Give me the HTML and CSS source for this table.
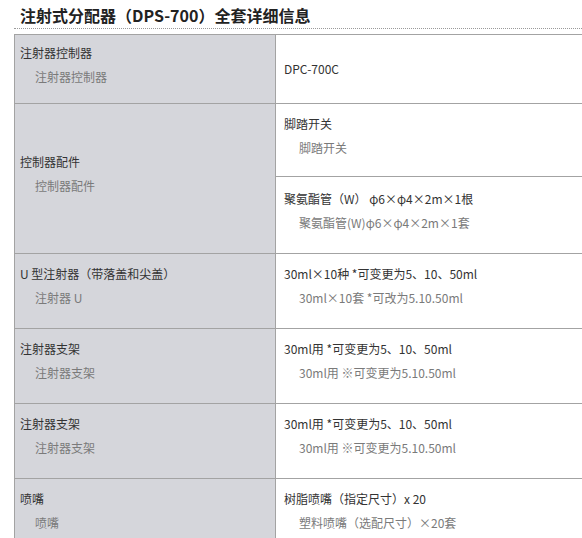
FILE: index.html
```html
<!DOCTYPE html>
<html lang="zh-CN">
<head>
<meta charset="utf-8">
<title>注射式分配器（DPS-700）全套详细信息</title>
<link rel="stylesheet" href="styles.css">
</head>
<body>
<div class="page">
  <h2 class="title">注射式分配器（DPS-700）全套详细信息</h2>
  <div class="spec">
    <div class="cell head first"><div class="main">注射器控制器</div><div class="sub">注射器控制器</div></div>
    <div class="cell val first-val center"><div class="main">DPC-700C</div></div>

    <div class="cell head span2"><div class="main">控制器配件</div><div class="sub">控制器配件</div></div>
    <div class="cell val top-a"><div class="main">脚踏开关</div><div class="sub">脚踏开关</div></div>
    <div class="cell val top-b"><div class="main">聚氨酯管（W） φ6×φ4×2m×1根</div><div class="sub">聚氨酯管(W)φ6×φ4×2m×1套</div></div>

    <div class="cell head"><div class="main">U 型注射器（带落盖和尖盖）</div><div class="sub">注射器 U</div></div>
    <div class="cell val"><div class="main">30ml×10种 *可变更为5、10、50ml</div><div class="sub">30ml×10套 *可改为5.10.50ml</div></div>

    <div class="cell head"><div class="main">注射器支架</div><div class="sub">注射器支架</div></div>
    <div class="cell val"><div class="main">30ml用 *可变更为5、10、50ml</div><div class="sub">30ml用 ※可变更为5.10.50ml</div></div>

    <div class="cell head"><div class="main">注射器支架</div><div class="sub">注射器支架</div></div>
    <div class="cell val"><div class="main">30ml用 *可变更为5、10、50ml</div><div class="sub">30ml用 ※可变更为5.10.50ml</div></div>

    <div class="cell head"><div class="main">喷嘴</div><div class="sub">喷嘴</div></div>
    <div class="cell val"><div class="main">树脂喷嘴（指定尺寸）x 20</div><div class="sub">塑料喷嘴（选配尺寸）×20套</div></div>
  </div>
</div>
</body>
</html>
```

FILE: styles.css
```css
html, body {
  margin: 0;
  padding: 0;
  overflow: hidden;
  background: #ffffff;
}

body {
  font-family: "Noto Sans CJK SC", "Noto Sans", sans-serif;
  color: #333333;
}

.page {
  padding-left: 14px;
  width: 600px;
}

.title {
  margin: 4px 0 5px 0;
  padding: 0 0 2px 6px;
  font-size: 16px;
  line-height: 22px;
  font-weight: 700;
  color: #222222;
  border-bottom: 1px dotted #9a9a9a;
}

.spec {
  display: grid;
  grid-template-columns: 261px 1fr;
  border-top: 1px solid #a3a3a3;
  border-left: 1px solid #a3a3a3;
}

.cell {
  box-sizing: border-box;
  border-right: 1px solid #a3a3a3;
  border-bottom: 1px solid #a3a3a3;
  padding: 8px 8px 18px 8px;
  font-size: 12px;
  line-height: 24px;
}

.head {
  background: #d5d6db;
  padding-left: 5px;
}

.first {
  padding-top: 6px;
  padding-bottom: 14px;
}

.first-val {
  padding-top: 14px;
  padding-bottom: 14px;
}

.center {
  display: flex;
  flex-direction: column;
  justify-content: center;
}

.span2 {
  grid-row: span 2;
  display: flex;
  flex-direction: column;
  justify-content: center;
}

.top-a {
  padding-top: 8px;
  padding-bottom: 16px;
}

.top-b {
  padding-top: 10px;
  padding-bottom: 18px;
}

.main {
  color: #333333;
  white-space: nowrap;
}

.sub {
  color: #7a7a7a;
  padding-left: 15px;
  white-space: nowrap;
}
```
